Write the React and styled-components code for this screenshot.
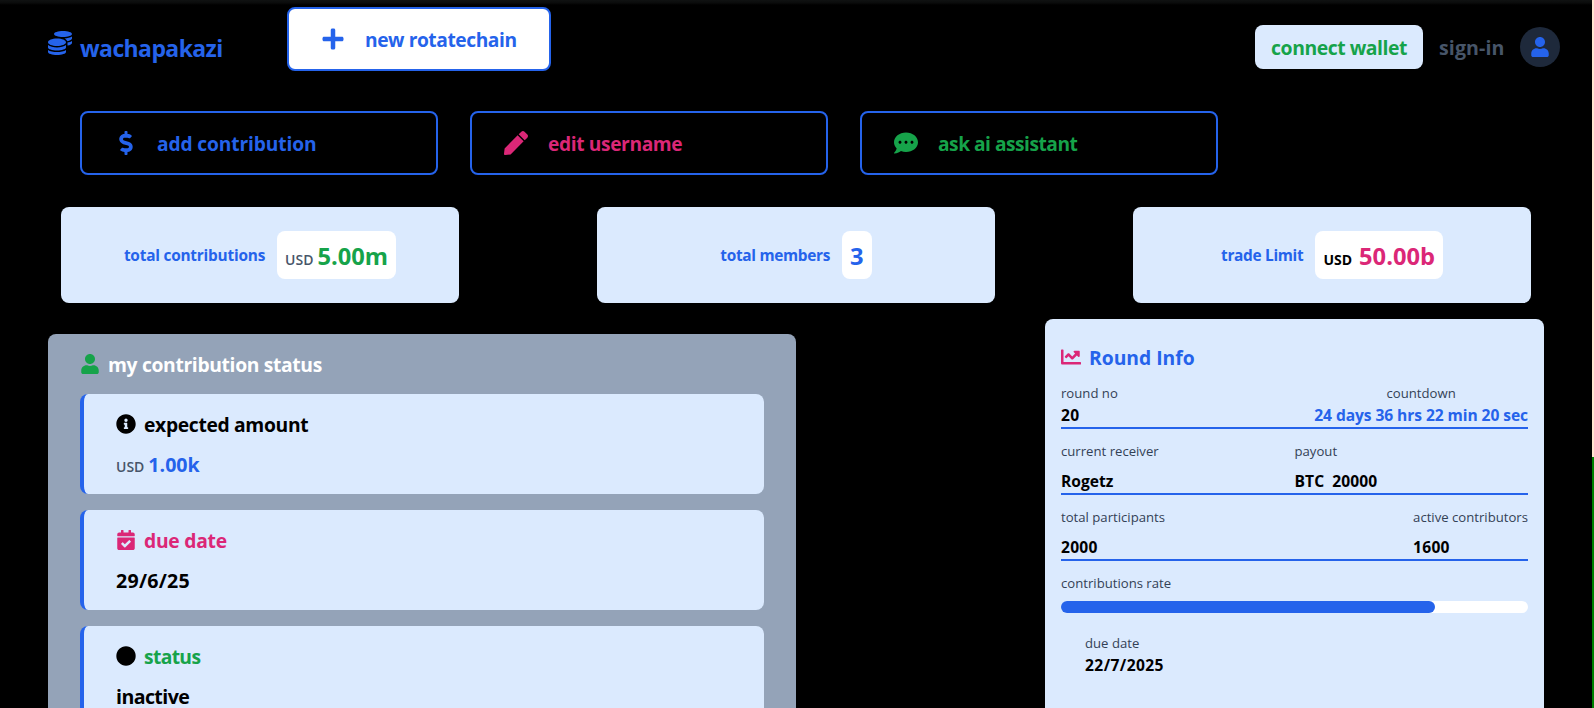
import React from "react";
import styled, { createGlobalStyle, css } from "styled-components";
import {
  FaCoins,
  FaPlus,
  FaUser,
  FaDollarSign,
  FaPen,
  FaCommentDots,
  FaInfoCircle,
  FaCalendarCheck,
  FaCircle,
  FaChartLine,
} from "react-icons/fa";

const blue = "#2563eb";
const green = "#16a34a";
const pink = "#db2777";
const slate = "#475569";
const pale = "#dbeafe";

const GlobalStyle = createGlobalStyle`
  * { box-sizing: border-box; }
  body {
    margin: 0;
    background: #000;
    color: #000;
    font-family: "Open Sans", "Noto Sans", sans-serif;
  }
  svg { display: block; flex: none; }
`;

const bold = css`
  font-weight: 700;
  white-space: nowrap;
  letter-spacing: ${(p) => p.$track || 0}px;
`;

const Shell = styled.div`
  display: grid;
  grid-template-columns: 1fr 2px;
  height: 708px;
  overflow: hidden;
`;

const EdgeStrip = styled.div`
  background: linear-gradient(to bottom, #ffe4d0 457px, #008000 457px);
`;

const Page = styled.div`
  overflow: hidden;
  background: linear-gradient(to bottom, #101212 0, #0a0b0b 3px, #000 5px);
`;

const Header = styled.header`
  display: flex;
  align-items: flex-start;
  height: 111px;
  padding: 7px 32px 0 48px;
`;

const Brand = styled.div`
  display: flex;
  gap: 8px;
  width: 239px;
  padding-top: 24px;
  color: ${blue};
  font-size: 24px;
`;

const BrandName = styled.span`
  ${bold}
  font-size: 23px;
  line-height: 34px;
`;

const ActionButton = styled.button`
  ${bold}
  display: flex;
  align-items: center;
  gap: ${(p) => p.$gap || 20}px;
  width: ${(p) => p.$width}px;
  height: 64px;
  padding: 0 32px;
  border: 2px solid ${blue};
  border-radius: 8px;
  background: ${(p) => (p.$filled ? "#fff" : "transparent")};
  color: ${(p) => p.$color};
  font-family: inherit;
  font-size: 19.2px;

  svg {
    font-size: 24px;
  }
`;

const ButtonText = styled.span`
  padding-top: 1px;
`;

const Account = styled.div`
  display: flex;
  align-items: center;
  gap: 16px;
  margin: 18px 0 0 auto;
`;

const WalletButton = styled.button`
  ${bold}
  width: 168px;
  height: 44px;
  padding: 1px 0 0;
  border: 0;
  border-radius: 8px;
  background: ${pale};
  color: ${green};
  font-family: inherit;
  font-size: 19.4px;
`;

const SignIn = styled.a`
  ${bold}
  width: 65px;
  padding-top: 1px;
  color: ${slate};
  font-size: 19.6px;
`;

const Avatar = styled.div`
  display: grid;
  place-items: center;
  width: 40px;
  height: 40px;
  border-radius: 50%;
  background: #1e293b;
  color: ${blue};
  font-size: 20px;
`;

const Actions = styled.nav`
  display: flex;
  gap: 32px;
  padding-left: 80px;
`;

const Stats = styled.section`
  display: flex;
  justify-content: space-between;
  padding: 32px 61px 0;
`;

const StatCard = styled.article`
  display: flex;
  align-items: center;
  justify-content: center;
  gap: 12px;
  width: 398px;
  height: 96px;
  border-radius: 8px;
  background: ${pale};
`;

const StatLabel = styled.span`
  ${bold}
  color: ${blue};
  font-size: 15.4px;
`;

const StatPill = styled.div`
  ${bold}
  display: flex;
  align-items: baseline;
  gap: ${(p) => p.$gap || 4}px;
  height: 48px;
  padding: 0 8px;
  border-radius: 8px;
  background: #fff;
  color: ${(p) => p.$color};
  font-size: 23.7px;
  line-height: 50px;
`;

const Currency = styled.small`
  font-size: 14px;
  font-weight: ${(p) => (p.$dark ? 700 : 600)};
  color: ${(p) => (p.$dark ? "#000" : slate)};
`;

const Columns = styled.main`
  display: flex;
  align-items: flex-start;
  justify-content: space-between;
  padding: 16px 48px 0;
`;

const StatusPanel = styled.section`
  display: flex;
  flex-direction: column;
  gap: 16px;
  width: 748px;
  height: 460px;
  margin-top: 15px;
  padding: 16px 32px;
  border-radius: 8px;
  background: #94a3b8;
`;

const Heading = styled.h2`
  ${bold}
  display: flex;
  align-items: center;
  gap: 8px;
  height: 28px;
  margin: 0;
  color: ${(p) => p.$color};
  font-size: 19.3px;

  svg {
    color: ${(p) => p.$icon};
    font-size: 20px;
  }
`;

const HeadingText = styled.span`
  padding-top: 2px;
  line-height: 26px;
`;

const StatusCard = styled.article`
  display: flex;
  flex-direction: column;
  gap: 12px;
  flex: none;
  height: 100px;
  padding: 16px 32px;
  border-left: 4px solid ${blue};
  border-radius: 8px;
  background: ${pale};
`;

const StatusValue = styled.div`
  ${bold}
  display: flex;
  align-items: baseline;
  gap: 4px;
  color: ${(p) => p.$color || "#000"};
  font-size: 19.6px;
  line-height: 30px;
`;

const RoundPanel = styled.section`
  width: 499px;
  height: 460px;
  padding: 24px 16px;
  border-radius: 8px;
  background: ${pale};
`;

const RoundRow = styled.div`
  display: flex;
  justify-content: space-between;
  margin-top: 12px;
  border-bottom: 2px solid ${blue};
`;

const Field = styled.div`
  display: flex;
  flex-direction: column;
  gap: ${(p) => (p.$tight ? 0 : 8)}px;
  flex: ${(p) => (p.$half ? "1 1 0" : "none")};
  text-align: ${(p) => (p.$centered ? "center" : "left")};
`;

const FieldLabel = styled.span`
  color: #334155;
  font-size: 13.15px;
  line-height: 20px;
  white-space: nowrap;
`;

const FieldValue = styled.span`
  ${bold}
  display: flex;
  gap: 8px;
  color: ${(p) => p.$color || "#000"};
  font-size: 15.6px;
  line-height: 24px;
`;

const Track = styled.div`
  height: 12px;
  margin: 8px 0 20px;
  border-radius: 6px;
  background: #fff;
`;

const Fill = styled.div`
  width: 80%;
  height: 100%;
  border-radius: 6px;
  background: ${blue};
`;

const RateField = styled.div`
  display: flex;
  flex-direction: column;
  padding-top: 12px;
`;

const DueField = styled(Field)`
  padding-left: 24px;
`;

export default function App() {
  return (
    <>
      <GlobalStyle />
      <Shell>
        <Page>
          <Header>
            <Brand>
              <FaCoins />
              <BrandName $track={-0.6}>wachapakazi</BrandName>
            </Brand>
            <ActionButton $width={264} $color={blue} $track={-0.43} $filled>
              <FaPlus />
              <ButtonText>new rotatechain</ButtonText>
            </ActionButton>
            <Account>
              <WalletButton $track={-0.47}>connect wallet</WalletButton>
              <SignIn $track={0.1}>sign-in</SignIn>
              <Avatar>
                <FaUser />
              </Avatar>
            </Account>
          </Header>

          <Actions>
            <ActionButton $width={358} $color={blue} $track={-0.13} $gap={19}>
              <FaDollarSign />
              <ButtonText>add contribution</ButtonText>
            </ActionButton>
            <ActionButton $width={358} $color={pink} $track={-0.38}>
              <FaPen />
              <ButtonText>edit username</ButtonText>
            </ActionButton>
            <ActionButton $width={358} $color={green} $track={-0.5}>
              <FaCommentDots />
              <ButtonText>ask ai assistant</ButtonText>
            </ActionButton>
          </Actions>

          <Stats>
            <StatCard>
              <StatLabel $track={-0.22}>total contributions</StatLabel>
              <StatPill $color={green}>
                <Currency>USD</Currency>
                <span>5.00m</span>
              </StatPill>
            </StatCard>
            <StatCard>
              <StatLabel $track={-0.3}>total members</StatLabel>
              <StatPill $color={blue}>3</StatPill>
            </StatCard>
            <StatCard>
              <StatLabel $track={-0.3}>trade Limit</StatLabel>
              <StatPill $color={pink} $gap={7}>
                <Currency $dark>USD</Currency>
                <span>50.00b</span>
              </StatPill>
            </StatCard>
          </Stats>

          <Columns>
            <StatusPanel>
              <Heading $color="#fff" $icon={green} $track={-0.34}>
                <FaUser />
                <HeadingText>my contribution status</HeadingText>
              </Heading>
              <StatusCard>
                <Heading $color="#000" $icon="#000" $track={-0.33}>
                  <FaInfoCircle />
                  <HeadingText>expected amount</HeadingText>
                </Heading>
                <StatusValue $color={blue}>
                  <Currency>USD</Currency>
                  <span>1.00k</span>
                </StatusValue>
              </StatusCard>
              <StatusCard>
                <Heading $color={pink} $icon={pink} $track={-0.25}>
                  <FaCalendarCheck />
                  <HeadingText>due date</HeadingText>
                </Heading>
                <StatusValue $track={0.25}>29/6/25</StatusValue>
              </StatusCard>
              <StatusCard>
                <Heading $color={green} $icon="#000" $track={-0.65}>
                  <FaCircle />
                  <HeadingText>status</HeadingText>
                </Heading>
                <StatusValue $track={-0.6}>inactive</StatusValue>
              </StatusCard>
            </StatusPanel>

            <RoundPanel>
              <Heading $color={blue} $icon={pink}>
                <FaChartLine />
                <HeadingText>Round Info</HeadingText>
              </Heading>
              <RoundRow>
                <Field $tight>
                  <FieldLabel>round no</FieldLabel>
                  <FieldValue $track={0.25}>20</FieldValue>
                </Field>
                <Field $tight $centered>
                  <FieldLabel>countdown</FieldLabel>
                  <FieldValue $color={blue} $track={-0.08}>
                    24 days 36 hrs 22 min 20 sec
                  </FieldValue>
                </Field>
              </RoundRow>
              <RoundRow>
                <Field $half>
                  <FieldLabel>current receiver</FieldLabel>
                  <FieldValue>Rogetz</FieldValue>
                </Field>
                <Field $half>
                  <FieldLabel>payout</FieldLabel>
                  <FieldValue $track={0.1}>
                    <span>BTC</span>
                    <span>20000</span>
                  </FieldValue>
                </Field>
              </RoundRow>
              <RoundRow>
                <Field>
                  <FieldLabel>total participants</FieldLabel>
                  <FieldValue $track={0.25}>2000</FieldValue>
                </Field>
                <Field>
                  <FieldLabel>active contributors</FieldLabel>
                  <FieldValue $track={0.25}>1600</FieldValue>
                </Field>
              </RoundRow>
              <RateField>
                <FieldLabel>contributions rate</FieldLabel>
                <Track>
                  <Fill />
                </Track>
              </RateField>
              <DueField $tight>
                <FieldLabel>due date</FieldLabel>
                <FieldValue $track={0.4}>22/7/2025</FieldValue>
              </DueField>
            </RoundPanel>
          </Columns>
        </Page>
        <EdgeStrip />
      </Shell>
    </>
  );
}
